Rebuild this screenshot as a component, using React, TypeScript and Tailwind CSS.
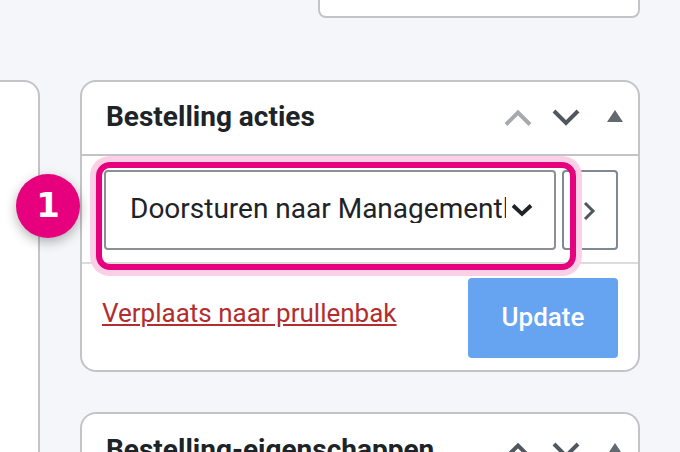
import React from "react";

function Controls({ upColor = "#a7aaad" }: { upColor?: string }) {
  return (
    <div className="flex items-center">
      <svg width="30" height="20" viewBox="0 0 30 20" fill="none">
        <path d="M3 16.5 L15 4.5 L27 16.5" stroke={upColor} strokeWidth="4" />
      </svg>
      <svg width="30" height="20" viewBox="0 0 30 20" fill="none" className="ml-[18px]">
        <path d="M3 3 L15 15 L27 3" stroke="#50575e" strokeWidth="4" />
      </svg>
      <svg width="16" height="12" viewBox="0 0 16 12" className="mb-[5px] ml-[26px]">
        <path d="M8 0 L16 12 L0 12 Z" fill="#646970" />
      </svg>
    </div>
  );
}

export default function App() {
  return (
    <div className="relative flex h-[452px] w-[680px] items-start gap-10 overflow-hidden bg-[#f5f6fa] font-['Roboto',sans-serif]">
      <div className="mt-20 box-border h-[400px] w-10 shrink-0 rounded-tr-2xl border-2 border-l-0 border-[#c3c4c7] bg-white" />
      <div className="flex w-[560px] shrink-0 flex-col">
        <div className="ml-auto box-border h-[18px] w-[322px] rounded-b-lg border-2 border-t-0 border-[#c3c4c7] bg-white" />
        <div className="relative mt-[62px] box-border h-[292px] rounded-2xl border-2 border-[#c3c4c7] bg-white">
          <div className="box-border flex h-[74px] items-center justify-between border-b-2 border-[#c3c4c7] pr-[15px] pl-6">
            <h2 className="mb-[3px] text-[28px] leading-8 font-bold text-[#1d2327]">Bestelling acties</h2>
            <Controls />
          </div>
          <div className="box-border flex h-[108px] gap-[6px] border-b-2 border-[#dcdcde] pt-[14px] pl-[22px]">
            <div className="box-border flex h-20 w-[452px] items-center rounded border-2 border-[#8c8f94] bg-white pl-6">
              <span className="mb-[2px] w-[376px] overflow-hidden text-[28px] leading-none whitespace-nowrap text-[#1d2327]">
                Doorsturen naar Managementl
              </span>
              <svg width="22" height="14" viewBox="0 0 22 14" fill="none" className="ml-[5px]">
                <path d="M2 2.5 L11 11 L20 2.5" stroke="#1d2327" strokeWidth="3.8" />
              </svg>
            </div>
            <div className="box-border flex h-20 w-14 items-center justify-center rounded border-2 border-[#7e8993] bg-white">
              <svg width="14" height="20" viewBox="0 0 14 20" fill="none" className="mt-[2px]">
                <path d="M2 2 L10 10 L2 18" stroke="#50575e" strokeWidth="3" />
              </svg>
            </div>
          </div>
          <div className="flex items-start justify-between pt-[14px] pr-5 pl-5">
            <a className="mt-[19px] text-[26px] leading-[32px] text-[#b32d2e] underline">Verplaats naar prullenbak</a>
            <button className="box-border h-20 w-[150px] rounded bg-[#66a3f0] pb-[2px] text-[26px] font-medium text-white">
              Update
            </button>
          </div>
          <div className="absolute top-[80px] left-[14px] box-border h-[108px] w-[480px] rounded-[14px] border-[6px] border-[#e6007e] shadow-[0_0_0_6px_#fbd0e6]" />
        </div>
        <div className="mt-[40px] box-border h-[60px] rounded-t-2xl border-2 border-b-0 border-[#c3c4c7] bg-white">
          <div className="flex h-[74px] items-center justify-between pr-[15px] pl-6">
            <h2 className="mb-[3px] text-[28px] leading-8 font-bold whitespace-nowrap text-[#1d2327]">Bestelling-eigenschappen</h2>
            <Controls upColor="#50575e" />
          </div>
        </div>
      </div>
      <div className="absolute top-[174px] left-4 flex h-16 w-16 items-center justify-center rounded-full bg-[#e6007e] pb-[2px] font-['DejaVu_Sans',sans-serif] text-[34px] font-bold text-white shadow-[0_4px_12px_rgba(0,0,0,0.3)]">
        1
      </div>
    </div>
  );
}
